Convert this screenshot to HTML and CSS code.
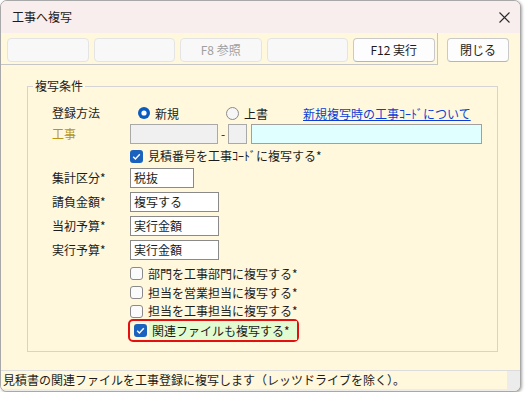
FILE: index.html
```html
<!DOCTYPE html>
<html lang="ja">
<head>
<meta charset="utf-8">
<title>工事へ複写</title>
<link rel="stylesheet" href="styles.css">
</head>
<body>
<div class="window">
  <div class="titlebar">
    <span class="title">工事へ複写</span>
    <svg class="close-x" width="11" height="11" viewBox="0 0 11 11"><path d="M0.5 0.5L10.5 10.5M10.5 0.5L0.5 10.5" stroke="#2a2a2a" stroke-width="1.1" fill="none"/></svg>
  </div>
  <div class="toolbar">
    <div class="tb-panel">
      <button class="btn fkey" disabled></button>
      <button class="btn fkey" disabled></button>
      <button class="btn fkey" disabled>F8 参照</button>
      <button class="btn fkey" disabled></button>
      <button class="btn fkey active">F12 実行</button>
    </div>
    <button class="btn close-btn">閉じる</button>
  </div>
  <div class="main">
    <div class="group">
      <span class="legend">複写条件</span>

      <div class="row r1">
        <span class="label">登録方法</span>
        <div class="ctrl">
          <svg class="radio-on" width="12" height="12" viewBox="0 0 12 12"><circle cx="6" cy="6" r="6" fill="#0b5cc0"/><circle cx="6" cy="6" r="2.6" fill="#fff"/></svg>
          <span class="rtext">新規</span>
          <svg class="radio-off" width="13" height="13" viewBox="0 0 13 13"><circle cx="6.5" cy="6.5" r="6" fill="#f6f6f6" stroke="#8a8a8a" stroke-width="1"/></svg>
          <span class="rtext">上書</span>
          <a class="link" href="#">新規複写時の工事ｺｰﾄﾞについて</a>
        </div>
      </div>

      <div class="row r2">
        <span class="label gold">工事</span>
        <div class="ctrl">
          <span class="inp gray w1"></span>
          <span class="dash">-</span>
          <span class="inp gray w2"></span>
          <span class="inp cyan w3"></span>
        </div>
      </div>

      <div class="row r3 chkrow">
        <span class="label"></span>
        <div class="ctrl">
          <svg class="cb" width="13" height="13" viewBox="0 0 13 13"><rect width="13" height="13" rx="3" fill="#1a62be"/><path d="M3.2 6.7L5.4 8.9L9.8 4.3" fill="none" stroke="#fff" stroke-width="1.4"/></svg>
          <span class="ctext">見積番号を工事ｺｰﾄﾞに複写する*</span>
        </div>
      </div>

      <div class="row r4">
        <span class="label">集計区分*</span>
        <div class="ctrl"><span class="inp white w4">税抜</span></div>
      </div>
      <div class="row r5">
        <span class="label">請負金額*</span>
        <div class="ctrl"><span class="inp white w5">複写する</span></div>
      </div>
      <div class="row r6">
        <span class="label">当初予算*</span>
        <div class="ctrl"><span class="inp white w5">実行金額</span></div>
      </div>
      <div class="row r7">
        <span class="label">実行予算*</span>
        <div class="ctrl"><span class="inp white w5">実行金額</span></div>
      </div>

      <div class="row r8 chkrow">
        <span class="label"></span>
        <div class="ctrl">
          <svg class="cb" width="13" height="13" viewBox="0 0 13 13"><rect x="0.5" y="0.5" width="12" height="12" rx="2.5" fill="#fbfbfb" stroke="#8a8a8a"/></svg>
          <span class="ctext">部門を工事部門に複写する*</span>
        </div>
      </div>
      <div class="row r9 chkrow">
        <span class="label"></span>
        <div class="ctrl">
          <svg class="cb" width="13" height="13" viewBox="0 0 13 13"><rect x="0.5" y="0.5" width="12" height="12" rx="2.5" fill="#fbfbfb" stroke="#8a8a8a"/></svg>
          <span class="ctext">担当を営業担当に複写する*</span>
        </div>
      </div>
      <div class="row r10 chkrow">
        <span class="label"></span>
        <div class="ctrl">
          <svg class="cb" width="13" height="13" viewBox="0 0 13 13"><rect x="0.5" y="0.5" width="12" height="12" rx="2.5" fill="#fbfbfb" stroke="#8a8a8a"/></svg>
          <span class="ctext">担当を工事担当に複写する*</span>
        </div>
      </div>
      <div class="row r11">
        <div class="highlight">
          <svg class="cb" width="13" height="13" viewBox="0 0 13 13"><rect width="13" height="13" rx="3" fill="#1a62be"/><path d="M3.2 6.7L5.4 8.9L9.8 4.3" fill="none" stroke="#fff" stroke-width="1.4"/></svg>
          <span class="ctext green">関連ファイルも複写する*</span>
        </div>
      </div>
    </div>
  </div>
  <div class="status">
    <div class="status-text">見積書の関連ファイルを工事登録に複写します（レッツドライブを除く）。</div>
  </div>
</div>
</body>
</html>
```

FILE: styles.css
```css
* { box-sizing: border-box; }
html, body { margin: 0; padding: 0; background: #ffffff; }
body {
  font-family: "Noto Sans CJK JP", "Noto Sans", sans-serif;
  font-size: 12px;
  color: #1c1c1c;
}

.window {
  width: 521px;
  height: 392px;
  border: 1px solid #a8a8a8;
  border-radius: 7px;
  overflow: hidden;
  background: #fff8dc;
  display: flex;
  flex-direction: column;
  box-shadow: 1px 1px 3px rgba(0, 0, 0, 0.35);
}

.titlebar {
  height: 32px;
  flex: none;
  background: #f9eeee;
  display: flex;
  align-items: center;
  justify-content: space-between;
  padding: 0 10px 0 11px;
}
.title { line-height: 16px; }
.close-x { display: block; }

.toolbar {
  height: 32px;
  flex: none;
  display: flex;
  align-items: flex-start;
}
.tb-panel {
  width: 437px;
  height: 32px;
  border-right: 1px solid #c6c6c6;
  border-bottom: 1px solid #c6c6c6;
  display: flex;
  gap: 5px;
  padding: 5px 0 0 6px;
}
.btn {
  font-family: inherit;
  font-size: 12px;
  height: 24px;
  padding: 0;
  border-radius: 4px;
  line-height: 20px;
  color: #1c1c1c;
}
.fkey {
  width: 81.5px;
  background: #f8f8f8;
  border: 1px solid #e4e4e4;
}
.fkey:disabled { color: #a0a0a0; }
.fkey.active, .close-btn {
  background: #fdfdfd;
  border: 1px solid #c9c9c9;
  border-bottom-color: #b5b5b5;
  color: #1c1c1c;
}
.close-btn {
  width: 62px;
  margin: 5px 0 0 9px;
}

.main {
  flex: 1;
  padding: 21px 0 0 26px;
}
.group {
  position: relative;
  width: 471px;
  height: 266px;
  border: 1px solid #d4d4d4;
  padding: 16px 0 0 24px;
  display: flex;
  flex-direction: column;
}
.legend {
  position: absolute;
  top: -9px;
  left: 5px;
  padding: 0 2px;
  line-height: 16px;
  background: #fff8dc;
}

.row {
  display: flex;
  align-items: center;
  height: 20px;
}
.label {
  width: 78px;
  flex: none;
  line-height: 20px;
}
.gold { color: #b8951a; }
.ctrl {
  display: flex;
  align-items: center;
}

.r2 { margin-top: 1px; }
.r3 { margin-top: 2px; }
.r4 { margin-top: 2px; }
.r5, .r6, .r7 { margin-top: 4px; }
.r8 { margin-top: 4px; height: 19px; }
.r9 { height: 19px; }
.r10 { height: 18px; }
.r11 { margin-top: -1px; height: 23px; padding-left: 76px; }

.radio-on { margin-left: 8px; display: block; }
.radio-off { margin-left: 47px; display: block; }
.rtext { margin-left: 5px; }
.link {
  margin-left: 35px;
  color: #0b3fd6;
  text-decoration: underline;
}

.inp {
  display: block;
  height: 20px;
  line-height: 18px;
  padding-left: 3px;
  border: 1px solid #8a8a8a;
  background: #ffffff;
}
.inp.gray { background: #f0f0f0; border-color: #a9a9a9; }
.inp.cyan { background: #e0ffff; border-color: #a0a0a0; }
.w1 { width: 88px; }
.w2 { width: 19px; }
.w3 { width: 231px; margin-left: 4px; }
.w4 { width: 64px; }
.w5 { width: 89px; }
.dash {
  width: 10px;
  text-align: center;
  line-height: 20px;
}

.cb { display: block; flex: none; }
.ctext { margin-left: 5px; line-height: 18px; }

.highlight {
  display: flex;
  align-items: center;
  width: 171px;
  height: 23px;
  border: 2px solid #e41010;
  border-radius: 5px;
  padding-left: 4px;
}
.ctext.green {
  margin-left: 2px;
  padding-left: 3px;
  align-self: stretch;
  flex: 1;
  line-height: 19px;
  background: #e3fbd0;
}

.status {
  height: 21px;
  flex: none;
  border-top: 1px solid #dcdcdc;
  background: #ececec;
}
.status-text {
  width: 506px;
  height: 18px;
  line-height: 18px;
  padding-left: 2px;
  background: #fff8dc;
  white-space: nowrap;
  overflow: hidden;
}
```
